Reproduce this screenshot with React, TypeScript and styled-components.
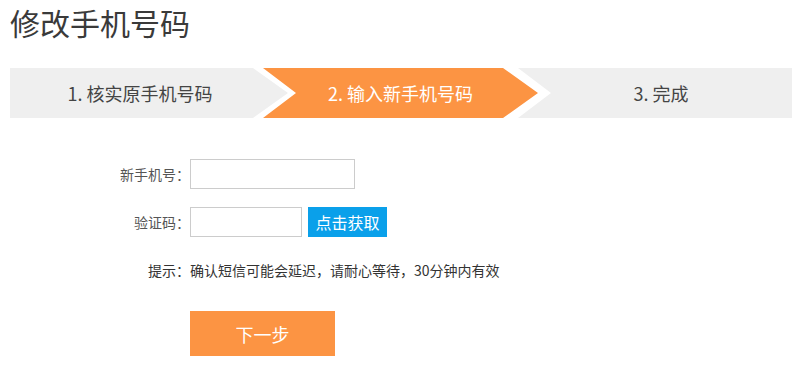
import React from 'react'
import styled, { createGlobalStyle } from 'styled-components'

const GlobalStyle = createGlobalStyle`
  html,
  body {
    margin: 0;
    padding: 0;
    background: #ffffff;
  }
  body {
    font-family: 'Noto Sans CJK SC', 'Liberation Sans', sans-serif;
    color: #333333;
  }
  * {
    box-sizing: border-box;
  }
`

const Page = styled.div`
  width: 800px;
  padding: 0 10px;
`

const Title = styled.h1`
  margin: 2px 0 0 0;
  font-size: 30px;
  line-height: 40px;
  font-weight: 400;
  color: #3a3a3a;
`

const StepBar = styled.div`
  display: flex;
  margin-top: 26px;
  height: 50px;
`

type StepKind = 'first' | 'mid' | 'last'

// chevrons: arrow 35px deep, notch 33px, widths / overlaps measured off the reference
const stepShape: Record<StepKind, { width: number; overlap: number; clip: string; pad: string }> = {
  first: {
    width: 278,
    overlap: 0,
    clip: 'polygon(0 0, calc(100% - 35px) 0, 100% 50%, calc(100% - 35px) 100%, 0 100%)',
    pad: '0 18px 0 0',
  },
  mid: {
    width: 275,
    overlap: 25,
    clip: 'polygon(0 0, calc(100% - 35px) 0, 100% 50%, calc(100% - 35px) 100%, 0 100%, 33px 50%)',
    pad: '0',
  },
  last: {
    width: 274,
    overlap: 20,
    clip: 'polygon(0 0, 100% 0, 100% 100%, 0 100%, 33px 50%)',
    pad: '0 0 0 12px',
  },
}

const Step = styled.div<{ $kind: StepKind; $active?: boolean }>`
  flex: 0 0 ${({ $kind }) => stepShape[$kind].width}px;
  margin-left: ${({ $kind }) => -stepShape[$kind].overlap}px;
  padding: ${({ $kind }) => stepShape[$kind].pad};
  clip-path: ${({ $kind }) => stepShape[$kind].clip};
  display: flex;
  align-items: center;
  justify-content: center;
  font-size: 18px;
  line-height: 50px;
  background: ${({ $active }) => ($active ? '#fc9443' : '#efefef')};
  color: ${({ $active }) => ($active ? '#ffffff' : '#444444')};
`

const Form = styled.div`
  display: flex;
  flex-direction: column;
  margin-top: 41px;
`

const FormRow = styled.div`
  display: grid;
  grid-template-columns: 180px auto;
  align-items: center;
  & + & {
    margin-top: 18px;
  }
`

const Label = styled.label`
  text-align: right;
  font-size: 14px;
  line-height: 20px;
  color: #555555;
`

const Field = styled.div`
  display: flex;
  align-items: center;
`

const Input = styled.input<{ $width: number }>`
  width: ${({ $width }) => $width}px;
  height: 30px;
  border: 1px solid #cccccc;
  background: #ffffff;
  padding: 0 6px;
  font-size: 14px;
  outline: none;
`

const CodeButton = styled.button`
  margin-left: 6px;
  width: 79px;
  height: 30px;
  border: none;
  padding: 0;
  background: #0aa0ea;
  color: #ffffff;
  font-family: inherit;
  font-size: 16px;
  line-height: 30px;
  cursor: pointer;
`

const Hint = styled.p`
  margin: 23px 0 0 138px;
  font-size: 14px;
  line-height: 20px;
  color: #333333;
`

const NextButton = styled.button`
  margin: 31px 0 0 180px;
  width: 145px;
  height: 45px;
  border: none;
  padding: 0;
  background: #fc9443;
  color: #ffffff;
  font-family: inherit;
  font-size: 18px;
  cursor: pointer;
`

export default function App() {
  return (
    <>
      <GlobalStyle />
      <Page>
        <Title>修改手机号码</Title>
        <StepBar>
          <Step $kind="first">1. 核实原手机号码</Step>
          <Step $kind="mid" $active>
            2. 输入新手机号码
          </Step>
          <Step $kind="last">3. 完成</Step>
        </StepBar>
        <Form>
          <FormRow>
            <Label>新手机号：</Label>
            <Field>
              <Input $width={165} type="text" />
            </Field>
          </FormRow>
          <FormRow>
            <Label>验证码：</Label>
            <Field>
              <Input $width={112} type="text" />
              <CodeButton>点击获取</CodeButton>
            </Field>
          </FormRow>
          <Hint>提示：确认短信可能会延迟，请耐心等待，30分钟内有效</Hint>
          <NextButton>下一步</NextButton>
        </Form>
      </Page>
    </>
  )
}
